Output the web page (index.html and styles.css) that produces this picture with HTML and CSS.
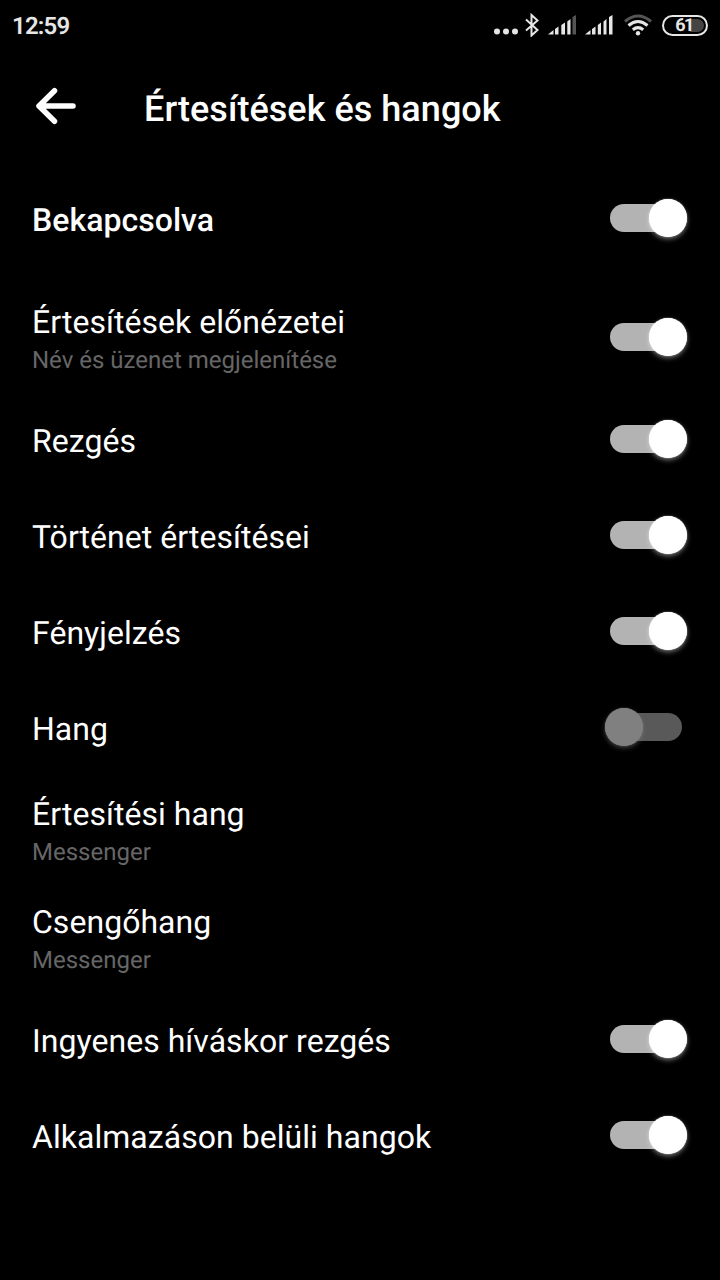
FILE: index.html
```html
<!DOCTYPE html>
<html lang="hu">
  <head>
    <meta charset="UTF-8" />
    <meta name="viewport" content="width=device-width, initial-scale=1.0" />
    <title>Értesítések és hangok</title>
    <link rel="stylesheet" href="styles.css">
  </head>
  <body>
    <div class="status-bar">
      <span class="time">12:59</span>
      <div class="status-icons">
        <svg class="dots" width="24" height="24" viewBox="0 0 24 24">
          <circle cx="3" cy="18.5" r="3" />
          <circle cx="12" cy="18.5" r="3" />
          <circle cx="21" cy="18.5" r="3" />
        </svg>
        <svg class="bluetooth" width="14" height="24" viewBox="0 0 14 24">
          <path d="M1 6.5L12.5 17L6.5 22.5V2L12.5 7.5L1 17.5" />
        </svg>
        <svg class="signal" width="28" height="24" viewBox="0 0 28 24">
          <path d="M0 21.5L5.5 17V21.5ZM7 16L10.5 13.5V21.5H7ZM13.3 12L17 9.5V21.5H13.3ZM19.3 8.5L22.5 6V21.5H19.3Z" />
          <path class="dim" d="M24.5 4L28 2V21.5H24.5Z" />
        </svg>
        <svg class="signal second" width="28" height="24" viewBox="0 0 28 24">
          <path d="M0 21.5L5.5 17V21.5ZM7 16L10.5 13.5V21.5H7ZM12.8 12L16 9.5V21.5H12.8ZM18.5 8.5L21.5 6V21.5H18.5ZM24 4L27.5 2V21.5H24Z" />
        </svg>
        <svg class="wifi" width="28" height="24" viewBox="0 0 28 24">
          <path class="dim" d="M1 8.5Q14 -2.5 27 8.5" />
          <path d="M4.5 12.5Q14 4.5 23.5 12.5" />
          <path d="M8.8 16.7Q14 12.6 19.2 16.7" />
          <circle cx="14" cy="20.3" r="2.2" />
        </svg>
        <div class="battery"><span>61</span></div>
      </div>
    </div>

    <header class="header">
      <svg class="back" width="40" height="38" viewBox="0 0 40 38">
        <path d="M37 19H3M18.5 3.7L3 19L18.5 34.3" />
      </svg>
      <h1>Értesítések és hangok</h1>
    </header>

    <main class="settings">
      <div class="row master">
        <div class="label">Bekapcsolva</div>
        <div class="toggle on"></div>
      </div>
      <div class="row double">
        <div>
          <div class="label">Értesítések előnézetei</div>
          <div class="sub">Név és üzenet megjelenítése</div>
        </div>
        <div class="toggle on"></div>
      </div>
      <div class="row">
        <div class="label">Rezgés</div>
        <div class="toggle on"></div>
      </div>
      <div class="row">
        <div class="label">Történet értesítései</div>
        <div class="toggle on"></div>
      </div>
      <div class="row">
        <div class="label">Fényjelzés</div>
        <div class="toggle on"></div>
      </div>
      <div class="row">
        <div class="label">Hang</div>
        <div class="toggle"></div>
      </div>
      <div class="row double">
        <div>
          <div class="label">Értesítési hang</div>
          <div class="sub">Messenger</div>
        </div>
      </div>
      <div class="row double">
        <div>
          <div class="label">Csengőhang</div>
          <div class="sub">Messenger</div>
        </div>
      </div>
      <div class="row">
        <div class="label">Ingyenes híváskor rezgés</div>
        <div class="toggle on"></div>
      </div>
      <div class="row">
        <div class="label">Alkalmazáson belüli hangok</div>
        <div class="toggle on"></div>
      </div>
    </main>
  </body>
</html>
```
FILE: styles.css
```css
* {
  box-sizing: border-box;
}
body {
  margin: 0;
  min-height: 1280px;
  background-color: #000;
  color: #fff;
  font-family: Roboto, sans-serif;
  text-rendering: geometricPrecision;
}

/* status bar */
.status-bar {
  display: flex;
  align-items: center;
  justify-content: space-between;
  height: 50px;
  padding: 0 12px;
  color: #e6e6e6;
}
.time {
  font-size: 24px;
  font-weight: 600;
  line-height: 28px;
  letter-spacing: -0.8px;
  padding-top: 2px;
}
.status-icons {
  display: flex;
  align-items: center;
}
.status-icons svg {
  fill: #e6e6e6;
}
.status-icons .dim {
  fill: #555;
}
.dots {
  margin-right: 7px;
}
.status-icons .bluetooth {
  fill: none;
  stroke: #e6e6e6;
  stroke-width: 2;
  margin-right: 9px;
}
.signal {
  margin-right: 9px;
}
.signal.second {
  margin-right: 11px;
}
.wifi {
  margin-right: 10px;
}
.wifi path {
  fill: none;
  stroke: #e6e6e6;
  stroke-width: 3;
}
.wifi path.dim {
  fill: none;
  stroke: #555;
}
.battery {
  width: 46px;
  height: 21px;
  padding: 2px;
  border: 2px solid #e6e6e6;
  border-radius: 11px;
}
.battery span {
  display: block;
  height: 13px;
  padding-right: 2px;
  border-radius: 7px;
  background: linear-gradient(to right, #000 62%, #444 62%);
  font-size: 18px;
  font-weight: 700;
  letter-spacing: -1.6px;
  line-height: 14px;
  text-align: center;
}

/* header */
.header {
  display: flex;
  align-items: center;
  height: 112px;
  padding-left: 36px;
}
.back {
  fill: none;
  stroke: #fff;
  stroke-width: 5.5;
  stroke-linecap: round;
  stroke-linejoin: round;
  margin-right: 68px;
}
h1 {
  margin: 0;
  padding-top: 6px;
  font-size: 36px;
  font-weight: 500;
  letter-spacing: 0.04px;
}

/* settings list */
.settings {
  margin-top: -9px;
}
.row {
  display: flex;
  align-items: center;
  justify-content: space-between;
  height: 96px;
  padding: 0 38px 0 32px;
}
.label {
  font-size: 32px;
  line-height: 38px;
  letter-spacing: 0.04px;
  padding-top: 4px;
}
.master {
  height: 130px;
}
.master .label {
  font-weight: 500;
}
.double {
  height: 108px;
}
.double .label {
  padding-top: 3px;
}
.sub {
  color: #666;
  font-size: 24px;
  line-height: 28px;
  padding-top: 5px;
}

/* toggle switch */
.toggle {
  position: relative;
  width: 72px;
  height: 28px;
  border-radius: 14px;
  background-color: #595959;
}
.toggle::after {
  content: "";
  position: absolute;
  top: -5px;
  left: -5px;
  width: 38px;
  height: 38px;
  border-radius: 50%;
  background-color: #808080;
  box-shadow: 0 0 1px #808080, 0 2px 5px rgba(128, 128, 128, 0.5);
}
.toggle.on {
  background-color: #b3b3b3;
}
.toggle.on::after {
  left: 39px;
  background-color: #fff;
  box-shadow: 0 0 1px #fff, 0 2px 5px rgba(255, 255, 255, 0.45);
}
```
